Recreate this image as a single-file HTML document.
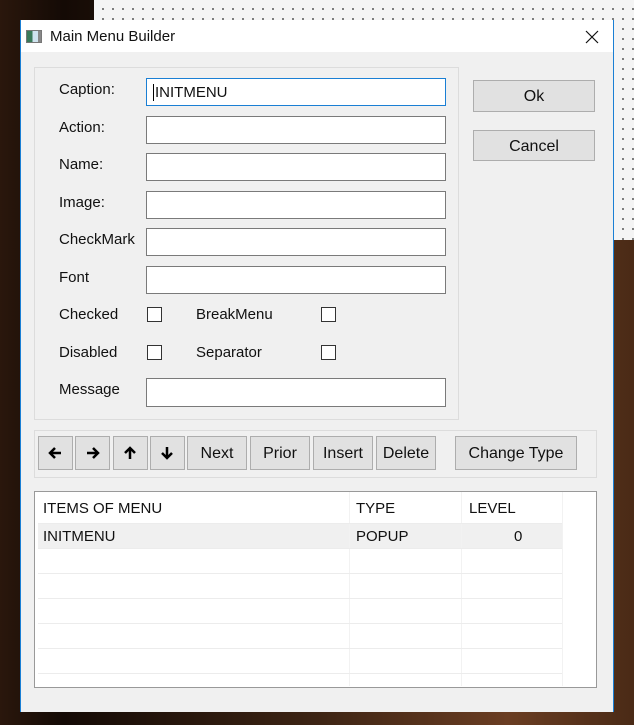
<!DOCTYPE html>
<html><head><style>
*{box-sizing:border-box;margin:0;padding:0}
body{width:634px;height:725px;position:relative;overflow:hidden;background:linear-gradient(90deg,#2a170c 0%,#140a05 10%,#3d2414 50%,#6a3d22 80%,#4a2a16 100%);font-family:"Liberation Sans",sans-serif;font-size:15px;color:#111}
.a{position:absolute}
.dots{left:94px;top:0;width:540px;height:240px;background-color:#f4f4f4;background-image:radial-gradient(#555 0.8px,transparent 1px);background-size:10px 10px;background-position:4px 4px}
.win{left:20px;top:20px;width:594px;height:692px;background:#f0f0f0;border:1px solid #1a7fd4;border-bottom:none;border-top:none}
.lbl{position:absolute;left:59px;font-size:15px}
.in{position:absolute;left:146px;width:300px;height:28px;background:#fff;border:1px solid #7a7a7a}
.cb{position:absolute;width:15px;height:15px;background:#fff;border:1px solid #333}
.btn{position:absolute;background:#e1e1e1;border:1px solid #adadad;text-align:center;font-size:16px}
.grp{position:absolute;border:1px solid #dcdcdc}
.hl{position:absolute;left:38px;width:524px;height:1px;background:#ececec}
.vl{position:absolute;top:492px;width:1px;height:194px;background:#f2f2f2}
</style></head><body>
<div class="a dots"></div>
<div class="a win"></div>
<div class="a" style="left:21px;top:20px;width:592px;height:32px;background:#fff"></div>
<div class="a" style="left:26px;top:30px;width:16px;height:13px;border:1px solid #777;background:linear-gradient(90deg,#3a7a5a 0 40%,#cfe3ef 40% 80%,#888 80%)"></div>
<div class="a" style="left:50px;top:28px;font-size:15px">Main Menu Builder</div>
<svg class="a" style="left:585px;top:30px" width="14" height="14"><path d="M1 1L13 13M13 1L1 13" stroke="#111" stroke-width="1.2"/></svg>

<div class="grp" style="left:34px;top:67px;width:425px;height:353px"></div>
<div class="lbl" style="top:81px">Caption:</div>
<div class="in" style="top:78px;border-color:#1a7fd4;padding:5px 0 0 6px;font-size:15px"><span style="border-left:1px solid #000;padding-left:1px">INITMENU</span></div>
<div class="lbl" style="top:119px">Action:</div><div class="in" style="top:116px"></div>
<div class="lbl" style="top:156px">Name:</div><div class="in" style="top:153px"></div>
<div class="lbl" style="top:194px">Image:</div><div class="in" style="top:191px"></div>
<div class="lbl" style="top:231px">CheckMark</div><div class="in" style="top:228px"></div>
<div class="lbl" style="top:269px">Font</div><div class="in" style="top:266px"></div>
<div class="lbl" style="top:306px">Checked</div><div class="cb" style="left:147px;top:307px"></div>
<div class="lbl" style="top:306px;left:196px">BreakMenu</div><div class="cb" style="left:321px;top:307px"></div>
<div class="lbl" style="top:344px">Disabled</div><div class="cb" style="left:147px;top:345px"></div>
<div class="lbl" style="top:344px;left:196px">Separator</div><div class="cb" style="left:321px;top:345px"></div>
<div class="lbl" style="top:381px">Message</div><div class="in" style="top:378px;height:29px"></div>

<div class="btn" style="left:473px;top:80px;width:122px;height:32px;line-height:32px">Ok</div>
<div class="btn" style="left:473px;top:130px;width:122px;height:31px;line-height:31px">Cancel</div>

<div class="grp" style="left:34px;top:430px;width:563px;height:48px"></div>
<div class="btn" style="left:38px;top:436px;width:35px;height:34px"></div>
<div class="btn" style="left:75px;top:436px;width:35px;height:34px"></div>
<div class="btn" style="left:113px;top:436px;width:35px;height:34px"></div>
<div class="btn" style="left:150px;top:436px;width:35px;height:34px"></div>
<svg class="a" style="left:38px;top:436px" width="150" height="34">
<path d="M12 17h11M17 12l-5 5 5 5" stroke="#000" stroke-width="2.5" fill="none"/>
<path d="M49 17h11M55 12l5 5-5 5" stroke="#000" stroke-width="2.5" fill="none"/>
<path d="M92 12v11M87 17l5-5 5 5" stroke="#000" stroke-width="2.5" fill="none"/>
<path d="M129 11v11M124 17l5 5 5-5" stroke="#000" stroke-width="2.5" fill="none"/>
</svg>
<div class="btn" style="left:187px;top:436px;width:60px;height:34px;line-height:34px">Next</div>
<div class="btn" style="left:250px;top:436px;width:60px;height:34px;line-height:34px">Prior</div>
<div class="btn" style="left:313px;top:436px;width:60px;height:34px;line-height:34px">Insert</div>
<div class="btn" style="left:376px;top:436px;width:60px;height:34px;line-height:34px">Delete</div>
<div class="btn" style="left:455px;top:436px;width:122px;height:34px;line-height:34px">Change Type</div>

<div class="a" style="left:34px;top:491px;width:563px;height:197px;background:#fff;border:1px solid #999"></div>
<div class="a" style="left:38px;top:524px;width:524px;height:24px;background:#f0f0f0"></div>
<div class="vl" style="left:349px"></div><div class="vl" style="left:461px"></div><div class="vl" style="left:562px"></div>
<div class="hl" style="top:523px"></div><div class="hl" style="top:548px"></div><div class="hl" style="top:573px"></div><div class="hl" style="top:598px"></div><div class="hl" style="top:623px"></div><div class="hl" style="top:648px"></div><div class="hl" style="top:673px"></div>
<div class="a" style="left:43px;top:500px">ITEMS OF MENU</div>
<div class="a" style="left:356px;top:500px">TYPE</div>
<div class="a" style="left:469px;top:500px">LEVEL</div>
<div class="a" style="left:43px;top:528px">INITMENU</div>
<div class="a" style="left:356px;top:528px">POPUP</div>
<div class="a" style="left:514px;top:528px">0</div>
</body></html>
